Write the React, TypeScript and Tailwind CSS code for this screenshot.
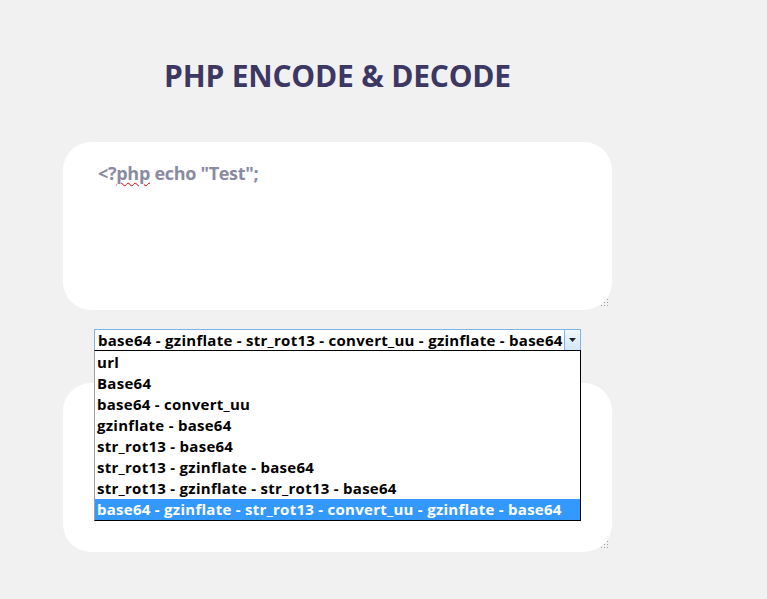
const options = [
  "url",
  "Base64",
  "base64 - convert_uu",
  "gzinflate - base64",
  "str_rot13 - base64",
  "str_rot13 - gzinflate - base64",
  "str_rot13 - gzinflate - str_rot13 - base64",
  "base64 - gzinflate - str_rot13 - convert_uu - gzinflate - base64",
];

function Grip() {
  return (
    <svg
      width="8"
      height="8"
      viewBox="0 0 8 8"
      className="absolute right-[3px] bottom-[3px]"
    >
      <rect x="6" y="0" width="1" height="1" fill="#a0a0a0" />
      <rect x="3" y="3" width="1" height="1" fill="#a0a0a0" />
      <rect x="6" y="3" width="1" height="1" fill="#a0a0a0" />
      <rect x="0" y="6" width="1" height="1" fill="#a0a0a0" />
      <rect x="3" y="6" width="1" height="1" fill="#a0a0a0" />
      <rect x="6" y="6" width="1" height="1" fill="#a0a0a0" />
    </svg>
  );
}

export default function App() {
  const selected = options.length - 1;

  return (
    <div className="min-h-[599px] bg-[#f1f1f1] font-['Open_Sans',sans-serif]">
      <div className="ml-[63px] w-[549px] pt-[56px]">
        <h1 className="text-center text-[30px] leading-[40px] font-bold text-[#3d3763] tracking-[-0.2px]">
          PHP ENCODE &amp; DECODE
        </h1>

        <div className="relative mt-[46px] h-[168px] rounded-[28px] bg-white pl-[35px] pt-[18px]">
          <p className="text-[18px] font-bold text-[#8a8aa2] tracking-[-0.3px]">
            &lt;?
            <span className="underline decoration-wavy decoration-red-600 decoration-1 underline-offset-2">
              php
            </span>{" "}
            echo "Test";
          </p>
          <Grip />
        </div>

        <div className="relative mt-[19px] ml-[31px] w-[487px]">
          <div className="flex h-[22px] items-center border border-[#7fb2e5] bg-white">
            <span className="flex-1 pl-[3px] text-[15px] font-bold tracking-[0.27px] text-black whitespace-nowrap overflow-hidden">
              {options[selected]}
            </span>
            <span className="flex h-[20px] w-[16px] items-center justify-center border-l border-[#7fb2e5] bg-gradient-to-b from-[#f2f8fd] to-[#d4e6f7]">
              <svg width="7" height="4" viewBox="0 0 7 4">
                <path d="M0 0h7L3.5 4z" fill="#222" />
              </svg>
            </span>
          </div>

          <ul className="absolute left-0 top-[21px] z-10 w-[487px] border border-black border-l-[#a0a0a0] bg-white pt-[1px]">
            {options.map((opt, i) => (
              <li
                key={opt}
                className={
                  i === selected
                    ? "h-[21px] pl-[2px] text-[15px] leading-[21px] font-bold tracking-[0.27px] bg-[#3399ff] text-white whitespace-nowrap"
                    : "h-[21px] pl-[2px] text-[15px] leading-[21px] font-bold tracking-[0.27px] text-black whitespace-nowrap"
                }
              >
                {opt}
              </li>
            ))}
          </ul>
        </div>

        <div className="relative mt-[32px] h-[169px] rounded-[28px] bg-white">
          <Grip />
        </div>
      </div>
    </div>
  );
}
